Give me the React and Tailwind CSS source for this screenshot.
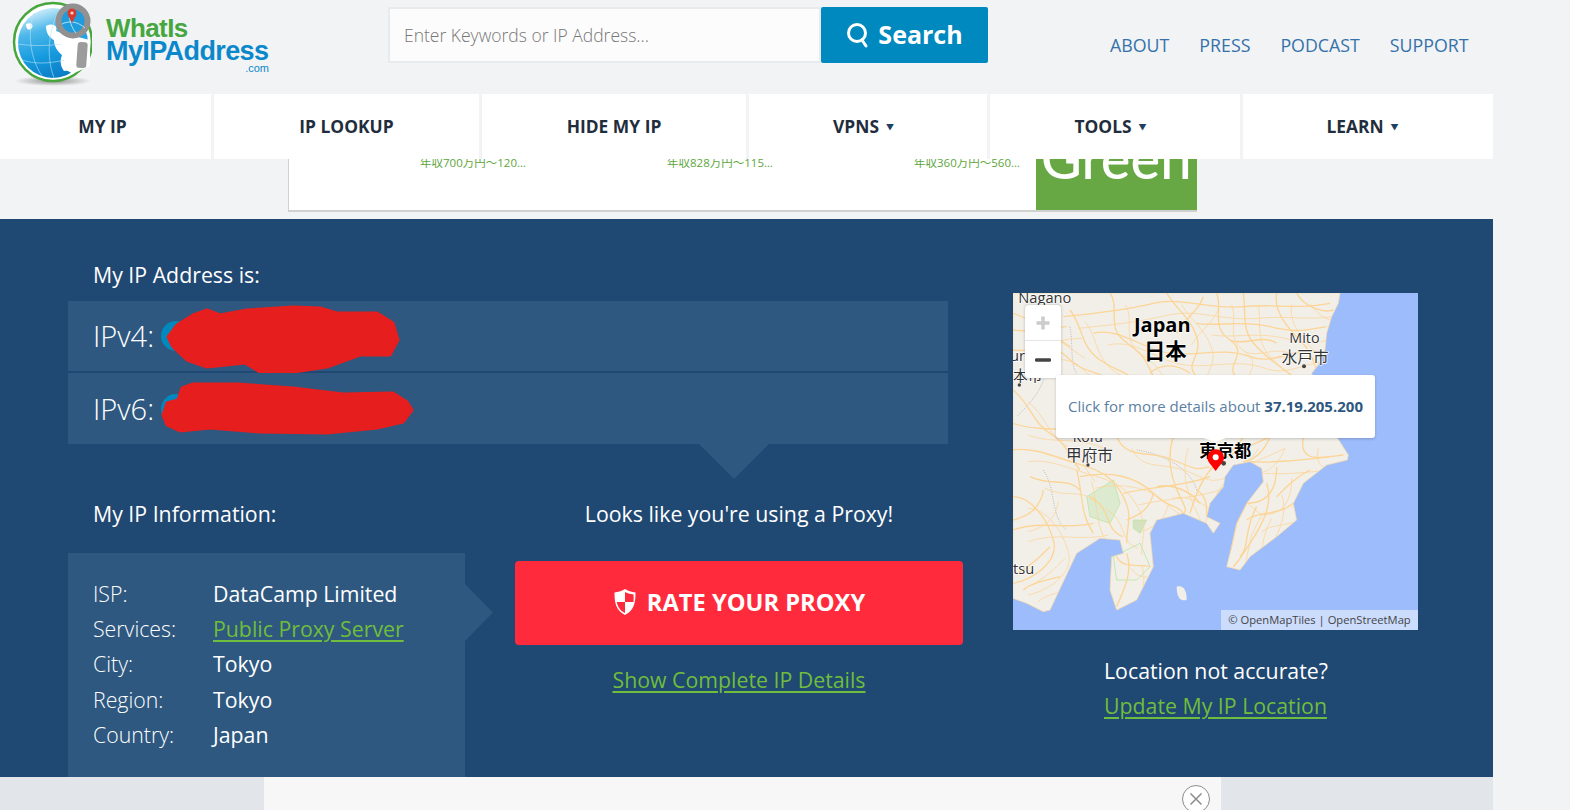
import React from 'react'

const font = { fontFamily: '"Open Sans", "Noto Sans CJK JP", sans-serif' }

const navItems = [
  { label: 'MY IP', w: 'w-[211px] pr-[6px]' },
  { label: 'IP LOOKUP', w: 'w-[265px]' },
  { label: 'HIDE MY IP', w: 'w-[264px]' },
  { label: 'VPNS', w: 'w-[238px] pr-[9px]', caret: true },
  { label: 'TOOLS', w: 'w-[250px] pr-[9px]', caret: true },
  { label: 'LEARN', w: 'flex-1 pr-[11px]', caret: true },
]

const infoRows = [
  ['ISP:', 'DataCamp Limited'],
  ['Services:', 'Public Proxy Server', true],
  ['City:', 'Tokyo'],
  ['Region:', 'Tokyo'],
  ['Country:', 'Japan'],
]

const roads = [
  'M620 9C640 60 600 110 660 150S640 230 680 260',
  'M700 9C710 70 690 120 740 170S800 220 850 260',
  'M800 9C790 60 830 110 860 140S900 180 920 240',
  'M470 9C500 60 540 80 560 140S520 220 560 260',
  'M300 9C330 50 290 110 340 150S400 190 430 260',
  'M180 60C220 110 210 170 270 210S340 240 360 260',
  'M9 180C60 190 120 150 170 200S250 240 280 260',
  'M250 130C330 110 400 180 480 190S640 170 720 200S860 160 940 190',
  'M160 80C260 70 350 60 430 40S600 60 700 50S850 60 960 40',
  'M560 100C620 110 700 90 780 110S880 120 950 110',
  'M580 20C570 60 520 90 500 130',
  'M660 150C700 170 760 130 800 160',
  'M9 300C60 340 70 400 120 430S170 490 210 540',
  'M9 480C70 470 130 500 200 520S310 560 340 620S350 700 350 760',
  'M200 540C220 620 210 670 250 730',
  'M320 440C350 510 420 480 490 510S560 540 600 530',
  'M490 440C470 500 480 560 510 620S520 650 520 680',
  'M700 440C680 480 640 500 610 530S560 600 540 670',
  'M780 440C760 490 730 510 700 515',
  'M880 440C870 490 890 510 960 500',
  'M720 515C790 520 870 510 1000 495',
  'M800 530C800 590 780 640 710 640',
  'M9 620C60 620 110 680 130 750S60 870 9 880',
  'M240 620C310 660 280 720 340 740',
  'M340 610C420 590 520 590 600 560',
  'M9 720C90 690 170 720 250 700',
  'M560 600C590 620 590 640 590 680',
  'M650 590L710 640L680 700L660 790',
  'M770 580C790 640 760 700 720 760S680 820 670 830',
  'M850 640C800 680 750 660 710 690',
  'M320 800C340 840 390 820 420 830',
  'M350 790C370 850 340 900 320 950',
  'M120 770C90 800 60 830 20 850',
  'M40 900C60 880 110 870 150 860',
  'M60 560C120 590 170 560 210 600',
  'M9 400C90 430 150 400 250 445',
  'M860 9C880 50 940 70 970 60',
  'M180 170C120 130 70 90 9 70',
  'M210 560C300 540 380 560 430 610S500 640 520 670',
  'M430 610C420 650 400 670 350 690',
  'M800 620C830 590 860 560 900 540',
  'M740 650C700 720 720 770 690 800',
  'M600 540C650 490 720 470 780 440',
  'M100 600C90 660 50 680 9 690',
  'M570 640C540 600 480 580 440 590',
  'M420 250C450 220 500 220 540 250',
  'M9 120C60 130 120 110 170 110',
]

const landPath =
  'M990 9L985 40 965 80 950 130 945 180 925 225 905 250 960 350 980 440 1015 495 1012 510 950 525 880 580 850 640 860 690 800 740 720 800 690 840 650 830 660 790 680 700 710 640 760 575 755 535 720 515 670 525 645 560 640 590 600 640 590 680 630 700 610 730 590 700 520 670 440 690 420 730 430 830 380 930 320 960 300 900 305 800 340 790 330 750 270 745 200 790 120 960 100 965 50 940 9 925 9 9Z'

function LogoMark() {
  return (
    <svg width="92" height="92" viewBox="0 0 92 92">
      <defs>
        <linearGradient id="globe" x1="0.3" y1="0" x2="0.6" y2="1">
          <stop offset="0" stopColor="#d8f0fb" />
          <stop offset="0.3" stopColor="#4db8ea" />
          <stop offset="0.65" stopColor="#169ade" />
          <stop offset="1" stopColor="#0a7cc6" />
        </linearGradient>
        <radialGradient id="shadow" cx="0.5" cy="0.5" r="0.5">
          <stop offset="0" stopColor="#8f8f8f" />
          <stop offset="1" stopColor="#f1f2f4" />
        </radialGradient>
      </defs>
      <ellipse cx="53" cy="81" rx="38" ry="5" fill="url(#shadow)" />
      <circle cx="53" cy="42" r="39" fill="#fff" stroke="#47a63c" strokeWidth="2.500" />
      <circle cx="53" cy="43" r="35" fill="url(#globe)" />
      <path d="M46 26C54 22 58 27 56 31 62 34 68 34 74 36L90 40 90 66 72 74C70 72 68 70 64 71 60 66 60 60 62 55 57 51 54 46 54 40 50 38 46 34 46 26ZM26 24C30 22 34 24 32 28 29 31 26 30 26 24Z" fill="#fff" />
      <path d="M18 44C32 46 46 46 62 44M34 13C27 32 30 58 42 76M22 60C34 64 48 64 64 60M60 9C48 30 46 56 54 78" fill="none" stroke="#b7e2f7" strokeWidth="0.6" />
      <circle cx="73" cy="21" r="14.500" fill="#1f9cdc" stroke="#919191" strokeWidth="6" />
      <path d="M62 24C70 20 78 22 85 28M70 11C68 20 72 28 76 33" fill="none" stroke="#d3eefa" strokeWidth="0.8" />
      <rect x="77" y="42" width="10" height="26" rx="3" fill="#9c9c9c" transform="rotate(4 82 55)" />
      <path d="M72 23C70 18 67.500 16 67.500 13A4.500 4.500 0 0 1 76.500 13C76.500 16 74 18 72 23Z" fill="#d83a2e" />
      <circle cx="72" cy="13" r="1.600" fill="#f4d6d2" />
    </svg>
  )
}

function Logo() {
  return (
    <div className="flex w-[388px] shrink-0">
      <div className="mt-0">
        <LogoMark />
      </div>
      <div className="ml-[14px] mt-[17px] w-[170px]" style={{ fontFamily: '"Liberation Sans", sans-serif' }}>
        <div className="text-[26px] leading-[22px] font-bold tracking-[-0.6px] text-[#46a63f]">WhatIs</div>
        <div className="mt-[1px] text-[27px] leading-[23px] font-bold tracking-[-0.6px] text-[#0b88cb]">MyIPAddress</div>
        <div className="pr-[7px] text-right text-[11px] leading-[10px] text-[#0b88cb]">.com</div>
      </div>
    </div>
  )
}

function Header() {
  return (
    <header className="flex h-[94px]">
      <Logo />
      <div className="mt-[7px] flex h-[56px]">
        <div className="flex w-[433px] items-center border-2 border-[#e9eaec] bg-[#fcfcfc] pl-[14px] text-[17.500px] font-light text-[#777]">
          Enter Keywords or IP Address...
        </div>
        <button className="flex w-[167px] items-center justify-center gap-[8px] rounded-[2px] bg-[#0089bf] text-[25px] font-bold text-white">
          <svg width="24" height="26" viewBox="0 0 24 26" fill="none" stroke="#fff" strokeWidth="3" strokeLinecap="round">
            <circle cx="11" cy="11" r="8.500" />
            <path d="M16 18l4 6" />
          </svg>
          Search
        </button>
      </div>
      <nav className="ml-[122px] mt-[33px] flex h-[24px] gap-[30px] text-[17.800px] leading-[24px] text-[#3572ab]">
        <a>ABOUT</a>
        <a>PRESS</a>
        <a>PODCAST</a>
        <a>SUPPORT</a>
      </nav>
    </header>
  )
}

function NavBar() {
  return (
    <div className="relative z-10 flex h-[65px] gap-[3px]">
      {navItems.map((item) => (
        <div key={item.label} className={`${item.w} flex items-center justify-center gap-[7px] bg-white text-[17.400px] font-bold text-[#1f2d3d]`}>
          {item.label}
          {item.caret && <span className="text-[8px] leading-none text-[#1f3f63]">▼</span>}
        </div>
      ))}
    </div>
  )
}

function AdStrip() {
  return (
    <div className="h-[60px] pl-[288px]">
      <div className="flex h-[53px] w-[909px] overflow-hidden border-b-2 border-l border-[#d0d0d0] bg-white">
        <div className="flex w-[747px] text-[11.500px] leading-[16px] text-[#5da63c]">
          <span className="-mt-[4px] ml-[131px] w-[247px]">年収700万円～120…</span>
          <span className="-mt-[4px] w-[247px]">年収828万円～115…</span>
          <span className="-mt-[4px]">年収360万円～560…</span>
        </div>
        <div className="w-[161px] overflow-hidden bg-[#68a844] pl-[5px] text-white" style={{ fontFamily: 'Lato, sans-serif' }}>
          <div className="-mt-[21px] text-[56px] leading-[40px] font-medium">Green</div>
        </div>
      </div>
    </div>
  )
}

function IpRow({ label, scribble, height }) {
  return (
    <div className={`relative flex ${height} items-center bg-[#2e587f] pl-[25px]`}>
      <span className="text-[29px] font-light text-white">{label}</span>
      <span className="ml-[7px] h-[30px] w-[30px] rounded-full bg-[#0089bf]" />
      {scribble}
    </div>
  )
}

function InfoBox() {
  return (
    <div className="relative h-[224px] w-[397px] bg-[#2e587f] pl-[25px] pt-[23px]">
      {infoRows.map(([k, v, link]) => (
        <div key={k} className="flex h-[35.300px] items-center">
          <span className="w-[120px] font-light text-white">{k}</span>
          {link ? <a className="text-[#6fbd3c] underline decoration-2 underline-offset-[3px]">{v}</a> : <span className="text-white">{v}</span>}
        </div>
      ))}
      <div className="absolute left-full top-[31px] h-[57px] w-[28px] bg-[#2e587f] [clip-path:polygon(0_0,100%_50%,0_100%)]" />
    </div>
  )
}

function MapPanel() {
  return (
    <div className="relative h-[337px] w-[405px] overflow-hidden bg-[#9dbcfb]">
      <svg width="405" height="337" viewBox="9 9 1215 1011" className="block">
        <defs>
          <clipPath id="land">
            <path d={landPath} />
          </clipPath>
        </defs>
        <path d={landPath} fill="#f2efe9" stroke="#fbd9a0" strokeWidth="2" />
        <path d="M500 890C520 885 530 900 530 930 510 935 500 920 500 890Z" fill="#f2efe9" />
        <g clipPath="url(#land)">
          <path d="M230 620L310 570 330 640 300 700 240 680Z" fill="#dcebcf" stroke="#b5e29a" strokeWidth="2" />
          <path d="M370 690L410 690 390 730 370 715Z" fill="#d3e3c2" stroke="#b5e29a" strokeWidth="2" />
          <path d="M310 800L390 760 420 830 380 870 320 870Z" fill="none" stroke="#a8e68f" strokeWidth="2" />
          <path d="M120 200C100 300 70 330 20 380M380 480C450 490 540 530 560 600M100 540C140 600 120 680 170 720M180 110C190 170 180 220 200 250" fill="none" stroke="#b9b9b9" strokeWidth="3" strokeDasharray="3 4" />
          <g transform="translate(45 35)" opacity="0.75">
            {roads.map((d) => (
              <path key={d} d={d} fill="none" stroke="#fcd596" strokeWidth="3" />
            ))}
          </g>
          {roads.map((d) => (
            <path key={d} d={d} fill="none" stroke="#fcd596" strokeWidth="4" />
          ))}
        </g>
        <g style={{ paintOrder: 'stroke' }} fill="#333" stroke="#fff" strokeWidth="4" strokeLinejoin="round" fontFamily='"Open Sans", "Noto Sans CJK JP", sans-serif'>
          <text x="25" y="38" fontSize="44">Nagano</text>
          <text x="372" y="125" fontSize="60" fontWeight="700" fill="#000">Japan</text>
          <text x="402" y="207" fontSize="64" fontWeight="700" fill="#000">日本</text>
          <text x="838" y="160" fontSize="43">Mito</text>
          <text x="815" y="218" fontSize="47">水戸市</text>
          <text x="0" y="212" fontSize="44">ur</text>
          <text x="9" y="272" fontSize="44">本市</text>
          <text x="188" y="455" fontSize="42">Kofu</text>
          <text x="168" y="512" fontSize="47">甲府市</text>
          <text x="568" y="502" fontSize="52" fontWeight="700" fill="#000">東京都</text>
          <text x="9" y="852" fontSize="44">tsu</text>
        </g>
        <circle cx="882" cy="229" r="6" fill="#444" />
        <circle cx="234" cy="525" r="5" fill="#444" />
        <circle cx="28" cy="285" r="5" fill="#444" />
        <circle cx="641" cy="520" r="7" fill="#444" />
        <path d="M617 543C605 525 592 515 592 503A25 25 0 0 1 642 503C642 515 629 525 617 543Z" fill="#ff0000" />
        <circle cx="617" cy="502" r="9" fill="#fff" />
      </svg>
      <div className="absolute left-[12px] top-[12px] h-[73px] w-[36px] rounded-[4px] bg-white shadow-[0_0_3px_rgba(0,0,0,0.25)]">
        <div className="flex h-[36px] items-center justify-center border-b border-[#e5e5e5]">
          <svg width="16" height="16" viewBox="0 0 16 16"><path d="M8 1.500v13M1.500 8h13" stroke="#ccc" strokeWidth="3.500" /></svg>
        </div>
        <div className="flex h-[37px] items-center justify-center">
          <svg width="16" height="16" viewBox="0 0 16 16"><path d="M1.500 8h13" stroke="#444" strokeWidth="3.500" strokeLinecap="round" /></svg>
        </div>
      </div>
      <div className="absolute left-[43px] top-[82px] flex h-[63px] w-[319px] items-center justify-center rounded-[3px] bg-white pb-[2px] text-[15px] text-[#5b80a4] shadow-[0_1px_3px_rgba(0,0,0,0.2)]">
        <span>Click for more details about <b className="font-bold text-[#2e587f]">37.19.205.200</b></span>
        <div className="absolute left-[148px] top-full h-[4px] w-[22px] bg-white [clip-path:polygon(0_0,100%_0,50%_100%)]" />
      </div>
      <div className="absolute bottom-0 right-0 flex h-[20px] w-[197px] items-center justify-center bg-[#cbdcfd] text-[11.200px] text-[#444]">
        © OpenMapTiles | OpenStreetMap
      </div>
    </div>
  )
}

function MainPanel() {
  return (
    <section className="flex h-[558px] overflow-hidden bg-[#1f4872] text-[21.300px] leading-[28px] text-white">
      <div className="ml-[68px] w-[945px] shrink-0">
        <div className="pl-[25px] pt-[42px]">My IP Address is:</div>
        <div className="mt-[12px] flex w-[880px] flex-col gap-[2px]">
          <IpRow
            label="IPv4:"
            height="h-[70px]"
            scribble={
              <svg className="absolute left-[90px] top-[0px]" width="250" height="74" viewBox="0 0 250 74">
                <path d="M10 36L19 24 35 14 49 9 62 14 89 9 135 6 162 7 179 12 219 12 235 22 240 39 232 54 202 54 169 66 129 72 102 71 87 62 49 66 29 59 15 46Z" fill="#e61e1e" stroke="#e61e1e" strokeWidth="3" strokeLinejoin="round" />
              </svg>
            }
          />
          <IpRow
            label="IPv6:"
            height="h-[71px]"
            scribble={
              <svg className="absolute left-[90px] top-[0px]" width="262" height="70" viewBox="0 0 262 70">
                <path d="M5 42L9 30 20 27 24 15 35 11 79 11 135 15 185 21 235 20 249 29 254 37 245 49 219 55 169 60 102 59 52 55 22 58 9 52Z" fill="#e61e1e" stroke="#e61e1e" strokeWidth="3" strokeLinejoin="round" />
              </svg>
            }
          />
        </div>
        <div className="ml-[631px] h-[35px] w-[70px] bg-[#2e587f] [clip-path:polygon(0_0,100%_0,50%_100%)]" />
        <div className="mt-[21px] flex">
          <div className="w-[447px] shrink-0">
            <div className="pl-[25px]">My IP Information:</div>
            <div className="mt-[25px]">
              <InfoBox />
            </div>
          </div>
          <div className="w-[448px] shrink-0 text-center">
            <div>Looks like you're using a Proxy!</div>
            <button className="mt-[33px] flex h-[84px] w-full items-center justify-center gap-[10px] rounded-[4px] bg-[#ff2a3c] pb-[2px] text-[23.700px] font-bold text-white">
              <svg width="24" height="28" viewBox="0 0 24 28">
                <path d="M12 1C8 3.500 5 4 1.500 4.500 1.500 14 2.500 22 12 27 21.500 22 22.500 14 22.500 4.500 19 4 16 3.500 12 1Z" fill="#fff" />
                <path d="M12 4L12 14 20.500 14C20.800 11 20.500 8.500 20.500 6.500 17.500 6 15 5.500 12 4ZM12 14L3.800 14C4.800 19 7 22.500 12 25Z" fill="#ff2a3c" />
              </svg>
              RATE YOUR PROXY
            </button>
            <a className="mt-[21px] block text-[#6fbd3c] underline decoration-2 underline-offset-[3px]">Show Complete IP Details</a>
          </div>
        </div>
      </div>
      <div className="pt-[74px]">
        <MapPanel />
        <div className="mt-[27px] pl-[91px]">Location not accurate?</div>
        <a className="mt-[7px] block pl-[91px] text-[#6fbd3c] underline decoration-2 underline-offset-[3px]">Update My IP Location</a>
      </div>
    </section>
  )
}

function BottomBar() {
  return (
    <div className="flex h-[33px] overflow-hidden bg-[#e2e5e9]">
      <div className="ml-[264px] flex h-[33px] w-[957px] justify-end bg-[#f7f7f7] pr-[11px] pt-[8px]">
        <span className="flex h-[28px] w-[28px] shrink-0 items-center justify-center rounded-full border border-[#8c8c8c] bg-white">
          <svg width="14" height="14" viewBox="0 0 14 14"><path d="M1.500 1.500l11 11M12.500 1.500l-11 11" stroke="#8c8c8c" strokeWidth="1.500" /></svg>
        </span>
      </div>
    </div>
  )
}

export default function App() {
  return (
    <div className="h-[810px] w-full overflow-hidden bg-[#f2f3f5]" style={font}>
      <div className="w-[1493px]">
        <Header />
        <NavBar />
        <AdStrip />
        <MainPanel />
        <BottomBar />
      </div>
    </div>
  )
}
